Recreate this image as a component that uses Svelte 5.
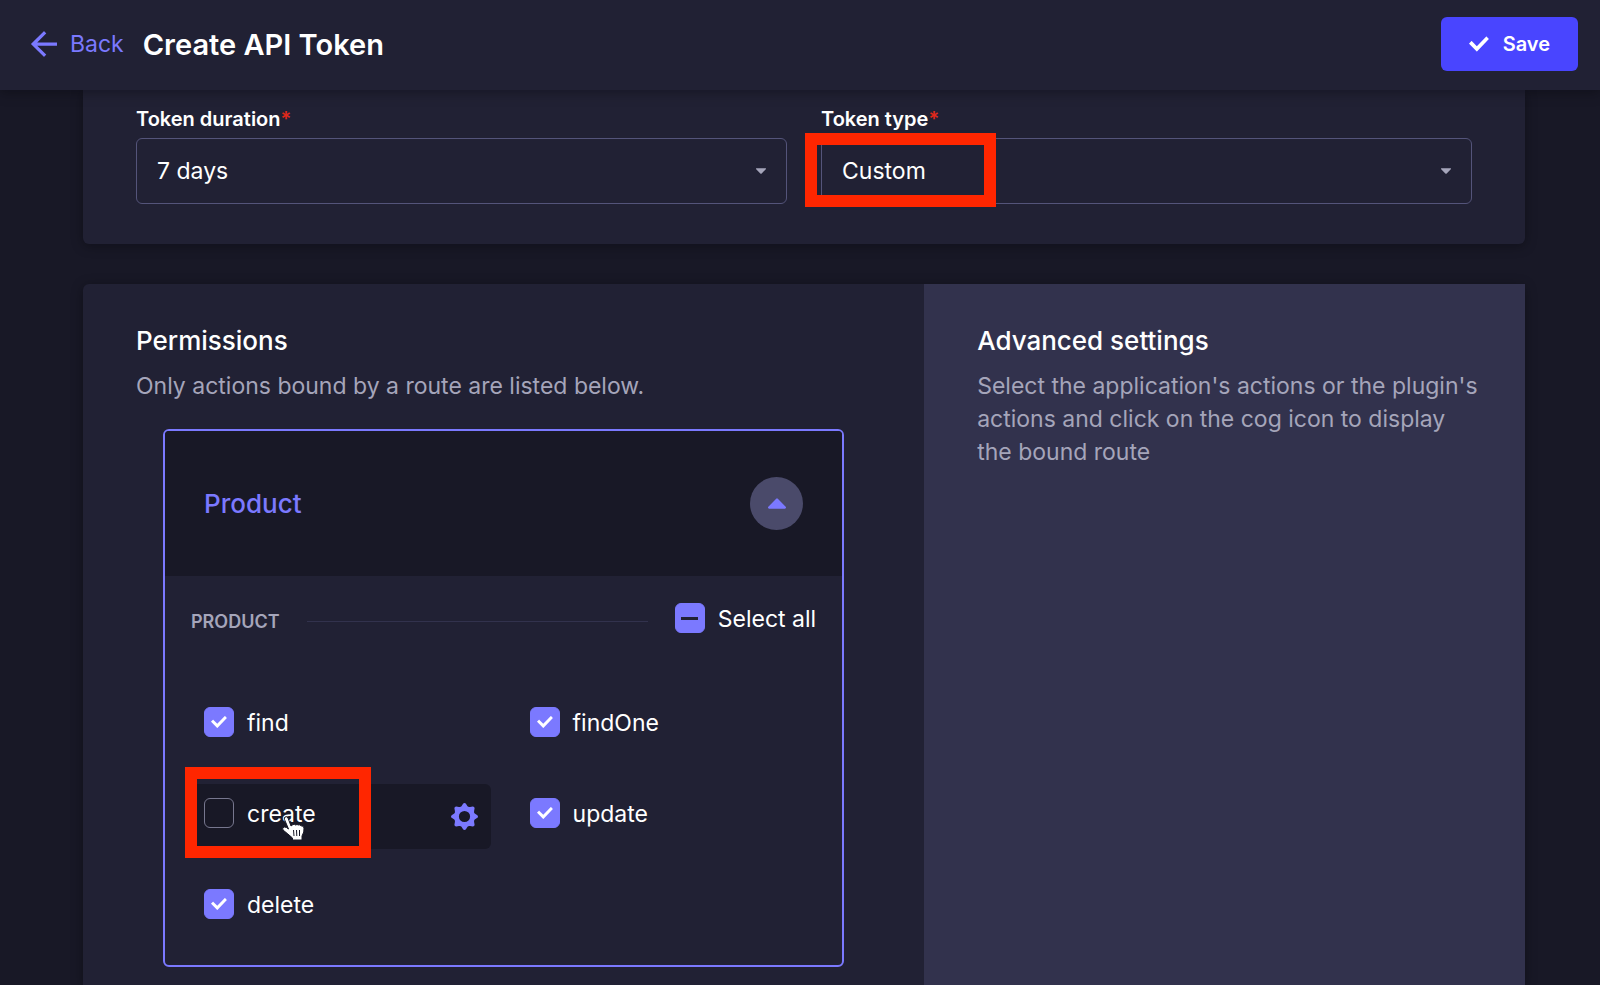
<script>
  let duration = '7';
  let tokenType = 'custom';

  let actions = [
    { name: 'find', checked: true },
    { name: 'findOne', checked: true },
    { name: 'create', checked: false, active: true },
    { name: 'update', checked: true },
    { name: 'delete', checked: true }
  ];

  $: allChecked = actions.every((action) => action.checked);
  $: someChecked = !allChecked && actions.some((action) => action.checked);

  function toggleAll(event) {
    const checked = event.currentTarget.checked;
    actions = actions.map((action) => ({ ...action, checked }));
  }

  const checkPath =
    'M20.727 2.97a.2.2 0 01.286 0l2.85 2.89a.2.2 0 010 .28L9.554 20.854a.2.2 0 01-.285 0l-9.13-9.243a.2.2 0 010-.281l2.85-2.892a.2.2 0 01.284 0l6.14 6.209L20.726 2.97z';
  const caretPath =
    'M14 .889a.86.86 0 01-.26.625L7.615 7.736A.834.834 0 017 8a.834.834 0 01-.615-.264L.26 1.514A.861.861 0 010 .889c0-.24.087-.45.26-.625A.834.834 0 01.875 0h12.25c.237 0 .442.088.615.264a.86.86 0 01.26.625z';
</script>

<div class="page">
  <header class="header">
    <a class="back" href="#back">
      <svg width="26" height="26" viewBox="0 0 24 24" fill="currentColor" aria-hidden="true">
        <path d="M24 13.3a.2.2 0 01-.2.2H5.74l8.239 8.239a.2.2 0 010 .282L12.14 23.86a.2.2 0 01-.282 0L.14 12.14a.2.2 0 010-.282L11.86.14a.2.2 0 01.282 0L13.98 1.98a.2.2 0 010 .282L5.74 10.5H23.8a.2.2 0 01.2.2v2.6z" />
      </svg>
      Back
    </a>
    <h1>Create API Token</h1>
    <button type="button" class="save">
      <svg width="20" height="20" viewBox="0 0 24 24" fill="currentColor" aria-hidden="true">
        <path d={checkPath} />
      </svg>
      Save
    </button>
  </header>

  <main class="content">
    <section class="details">
      <div class="field">
        <label for="duration">Token duration<span class="required">*</span></label>
        <div class="select">
          <select id="duration" bind:value={duration}>
            <option value="7">7 days</option>
            <option value="30">30 days</option>
            <option value="90">90 days</option>
            <option value="unlimited">Unlimited</option>
          </select>
          <svg width="10" height="6" viewBox="0 0 14 8" fill="currentColor" aria-hidden="true">
            <path d={caretPath} />
          </svg>
        </div>
      </div>
      <div class="field">
        <label for="type">Token type<span class="required">*</span></label>
        <div class="select">
          <select id="type" bind:value={tokenType}>
            <option value="read-only">Read-only</option>
            <option value="full-access">Full access</option>
            <option value="custom">Custom</option>
          </select>
          <svg width="10" height="6" viewBox="0 0 14 8" fill="currentColor" aria-hidden="true">
            <path d={caretPath} />
          </svg>
          <div class="highlight highlight-type"></div>
        </div>
      </div>
    </section>

    <section class="permissions">
      <div class="bound">
        <h2>Permissions</h2>
        <p>Only actions bound by a route are listed below.</p>

        <div class="accordion">
          <button type="button" class="accordion-header" aria-expanded="true">
            Product
            <span class="toggle">
              <svg width="18" height="11" viewBox="0 0 14 8" fill="currentColor" aria-hidden="true">
                <path d={caretPath} transform="rotate(180 7 4)" />
              </svg>
            </span>
          </button>

          <div class="accordion-body">
            <div class="group">
              <h3>Product</h3>
              <span class="divider"></span>
              <label class="check">
                <span class="box">
                  <input
                    type="checkbox"
                    checked={allChecked}
                    indeterminate={someChecked}
                    on:change={toggleAll}
                  />
                  {#if someChecked}
                    <span class="dash"></span>
                  {:else if allChecked}
                    <svg width="16" height="16" viewBox="0 0 24 24" fill="currentColor" aria-hidden="true">
                      <path d={checkPath} />
                    </svg>
                  {/if}
                </span>
                Select all
              </label>
            </div>

            <div class="actions">
              {#each actions as action}
                <div class="action" class:active={action.active}>
                  <label class="check">
                    <span class="box">
                      <input type="checkbox" bind:checked={action.checked} />
                      {#if action.checked}
                        <svg width="16" height="16" viewBox="0 0 24 24" fill="currentColor" aria-hidden="true">
                          <path d={checkPath} />
                        </svg>
                      {/if}
                    </span>
                    {action.name}
                  </label>
                  {#if action.active}
                    <button type="button" class="cog" aria-label="Show bound route">
                      <svg width="27" height="27" viewBox="-13.5 -13.5 27 27" fill="currentColor" aria-hidden="true">
                        <path
                          fill-rule="evenodd"
                          d="M0-13.5Q1-13.5 1.6-12.5L3-10.2Q4-9.2 5.5-9.6L8.3-10.1Q10.1-10.1 10.1-8.3L9.6-5.5Q9.2-4 10.2-3L12.5-1.6Q13.5-1 13.5 0Q13.5 1 12.5 1.6L10.2 3Q9.2 4 9.6 5.5L10.1 8.3Q10.1 10.1 8.3 10.1L5.5 9.6Q4 9.2 3 10.2L1.6 12.5Q1 13.5 0 13.5Q-1 13.5-1.6 12.5L-3 10.2Q-4 9.2-5.5 9.6L-8.3 10.1Q-10.1 10.1-10.1 8.3L-9.6 5.5Q-9.2 4-10.2 3L-12.5 1.6Q-13.5 1-13.5 0Q-13.5-1-12.5-1.6L-10.2-3Q-9.2-4-9.6-5.5L-10.1-8.3Q-10.1-10.1-8.3-10.1L-5.5-9.6Q-4-9.2-3-10.2L-1.6-12.5Q-1-13.5 0-13.5ZM0-5.6A5.6 5.6 0 1 0 0 5.6A5.6 5.6 0 1 0 0-5.6Z"
                        />
                      </svg>
                    </button>
                    <div class="highlight highlight-action"></div>
                    <svg class="pointer" width="26" height="28" viewBox="0 0 26 28" aria-hidden="true">
                      <path
                        d="M5 2Q7 1 8 3L11 11L13 9.5Q14.5 9 15.5 10Q17 9 18.5 10Q20 9.2 21 10.8Q23.5 10.5 24 13Q24.5 17 22 21V25H12.5V23Q8 19 3 15Q1.5 12.5 4.5 12Q6.5 12 8.5 14L4.5 4.5Q4 2.8 5 2Z"
                        fill="#fff"
                        stroke="#181826"
                      />
                      <path d="M13.5 15l.5 6M16.5 15l.3 6M19.5 15v6" fill="none" stroke="#181826" />
                    </svg>
                  {/if}
                </div>
              {/each}
            </div>
          </div>
        </div>
      </div>

      <aside class="advanced">
        <h2>Advanced settings</h2>
        <p>
          Select the application's actions or the plugin's actions and click on the cog icon to
          display the bound route
        </p>
      </aside>
    </section>
  </main>
</div>

<style>
  :global(body) {
    background: #181826;
  }

  .page {
    display: flex;
    flex-direction: column;
    min-height: 100vh;
    color: #fff;
    background: #181826;
    font-family: Inter, "Liberation Sans", sans-serif;
    font-size: 23px;
    line-height: 33px;
  }

  .page * {
    box-sizing: border-box;
  }

  svg {
    display: block;
    flex: none;
  }

  h1,
  h2,
  h3,
  p {
    margin: 0;
  }

  button,
  select {
    font: inherit;
    cursor: pointer;
  }

  /* Header */
  .header {
    position: relative;
    display: flex;
    align-items: center;
    height: 90px;
    padding: 0 22px 2px 31px;
    background: #212134;
    box-shadow: 0 2px 12px rgba(3, 3, 5, 0.35);
  }

  .back {
    display: flex;
    align-items: center;
    gap: 13px;
    color: #7b79ff;
    text-decoration: none;
  }

  h1 {
    margin-left: 19px;
    font-size: 29px;
    font-weight: 600;
  }

  .save {
    display: flex;
    align-items: center;
    gap: 14px;
    height: 54px;
    margin-left: auto;
    padding: 0 28px;
    color: #fff;
    background: #4945ff;
    border: 0;
    border-radius: 6px;
    font-size: 20px;
    font-weight: 600;
  }

  /* Token details */
  .content {
    display: flex;
    flex: 1;
    flex-direction: column;
    gap: 40px;
    padding: 0 75px 0 83px;
  }

  .details {
    display: grid;
    grid-template-columns: 1fr 1fr;
    gap: 34px;
    padding: 17px 53px 40px;
    background: #212134;
    border-radius: 0 0 6px 6px;
    box-shadow: 0 2px 12px rgba(3, 3, 5, 0.35);
  }

  .field label {
    display: block;
    margin-bottom: 7px;
    font-size: 20px;
    font-weight: 600;
    line-height: 24px;
  }

  .required {
    color: #e0281a;
  }

  .select {
    position: relative;
    display: grid;
    align-items: center;
  }

  .select select {
    grid-area: 1 / 1;
    width: 100%;
    height: 66px;
    padding: 0 20px;
    color: #fff;
    background: #212134;
    border: 1px solid #54547a;
    border-radius: 6px;
    appearance: none;
  }

  .select svg {
    grid-area: 1 / 1;
    justify-self: end;
    margin-right: 21px;
    color: #a5a5ba;
    pointer-events: none;
  }

  /* Permissions */
  .permissions {
    display: grid;
    flex: 1;
    grid-template-columns: 7fr 5fr;
    background: #212134;
    border-radius: 6px 6px 0 0;
    box-shadow: 0 2px 12px rgba(3, 3, 5, 0.35);
  }

  .bound,
  .advanced {
    padding: 40px 53px 18px;
  }

  .advanced {
    padding-right: 42px;
    background: #32324d;
  }

  h2 {
    margin-bottom: 13px;
    font-size: 26px;
    font-weight: 500;
  }

  p {
    color: #a5a5ba;
  }

  .accordion {
    margin: 26px 27px 0;
    overflow: hidden;
    border: 2px solid #7b79ff;
    border-radius: 6px;
  }

  .accordion-header {
    display: flex;
    align-items: center;
    justify-content: space-between;
    width: 100%;
    height: 145px;
    padding: 0 39px;
    color: #7b79ff;
    background: #181826;
    border: 0;
    font-size: 26px;
    font-weight: 500;
  }

  .toggle {
    display: grid;
    place-items: center;
    width: 53px;
    height: 53px;
    background: #4a4a6a;
    border-radius: 50%;
  }

  .accordion-body {
    padding: 27px 26px 25px;
  }

  .group {
    display: flex;
    align-items: center;
  }

  .group .check {
    padding-bottom: 4px;
  }

  h3 {
    color: #a5a5ba;
    font-size: 18px;
    font-weight: 600;
    text-transform: uppercase;
  }

  .divider {
    flex: 1;
    height: 1px;
    margin: 0 27px;
    background: #32324d;
  }

  .check {
    display: flex;
    align-items: flex-start;
    gap: 13px;
    padding-bottom: 4px;
    cursor: pointer;
  }

  .box {
    display: grid;
    place-items: center;
    width: 30px;
    height: 30px;
  }

  .box > * {
    grid-area: 1 / 1;
    pointer-events: none;
  }

  .box input {
    width: 30px;
    height: 30px;
    margin: 0;
    border: 1px solid #77778f;
    border-radius: 6px;
    appearance: none;
  }

  .box input:checked,
  .box input:indeterminate {
    background: #7b79ff;
    border-color: #7b79ff;
  }

  .dash {
    width: 17px;
    height: 3px;
    background: #212134;
  }

  .actions {
    display: grid;
    grid-template-columns: 1fr 1fr;
    gap: 26px;
    margin-top: 53px;
  }

  .action {
    position: relative;
    display: flex;
    align-items: center;
    justify-content: space-between;
    height: 65px;
    padding: 0 13px;
    border-radius: 6px;
  }

  .action.active {
    background: #181826;
  }

  .cog {
    padding: 0;
    color: #7b79ff;
    background: none;
    border: 0;
  }

  /* Callouts */
  .highlight {
    position: absolute;
    border: 12px solid #ff2600;
    pointer-events: none;
  }

  .highlight-type {
    top: -5px;
    left: -16px;
    width: 191px;
    height: 74px;
  }

  .highlight-action {
    top: -17px;
    left: -6px;
    width: 186px;
    height: 91px;
  }

  .pointer {
    position: absolute;
    top: 31px;
    left: 89px;
    pointer-events: none;
  }
</style>
